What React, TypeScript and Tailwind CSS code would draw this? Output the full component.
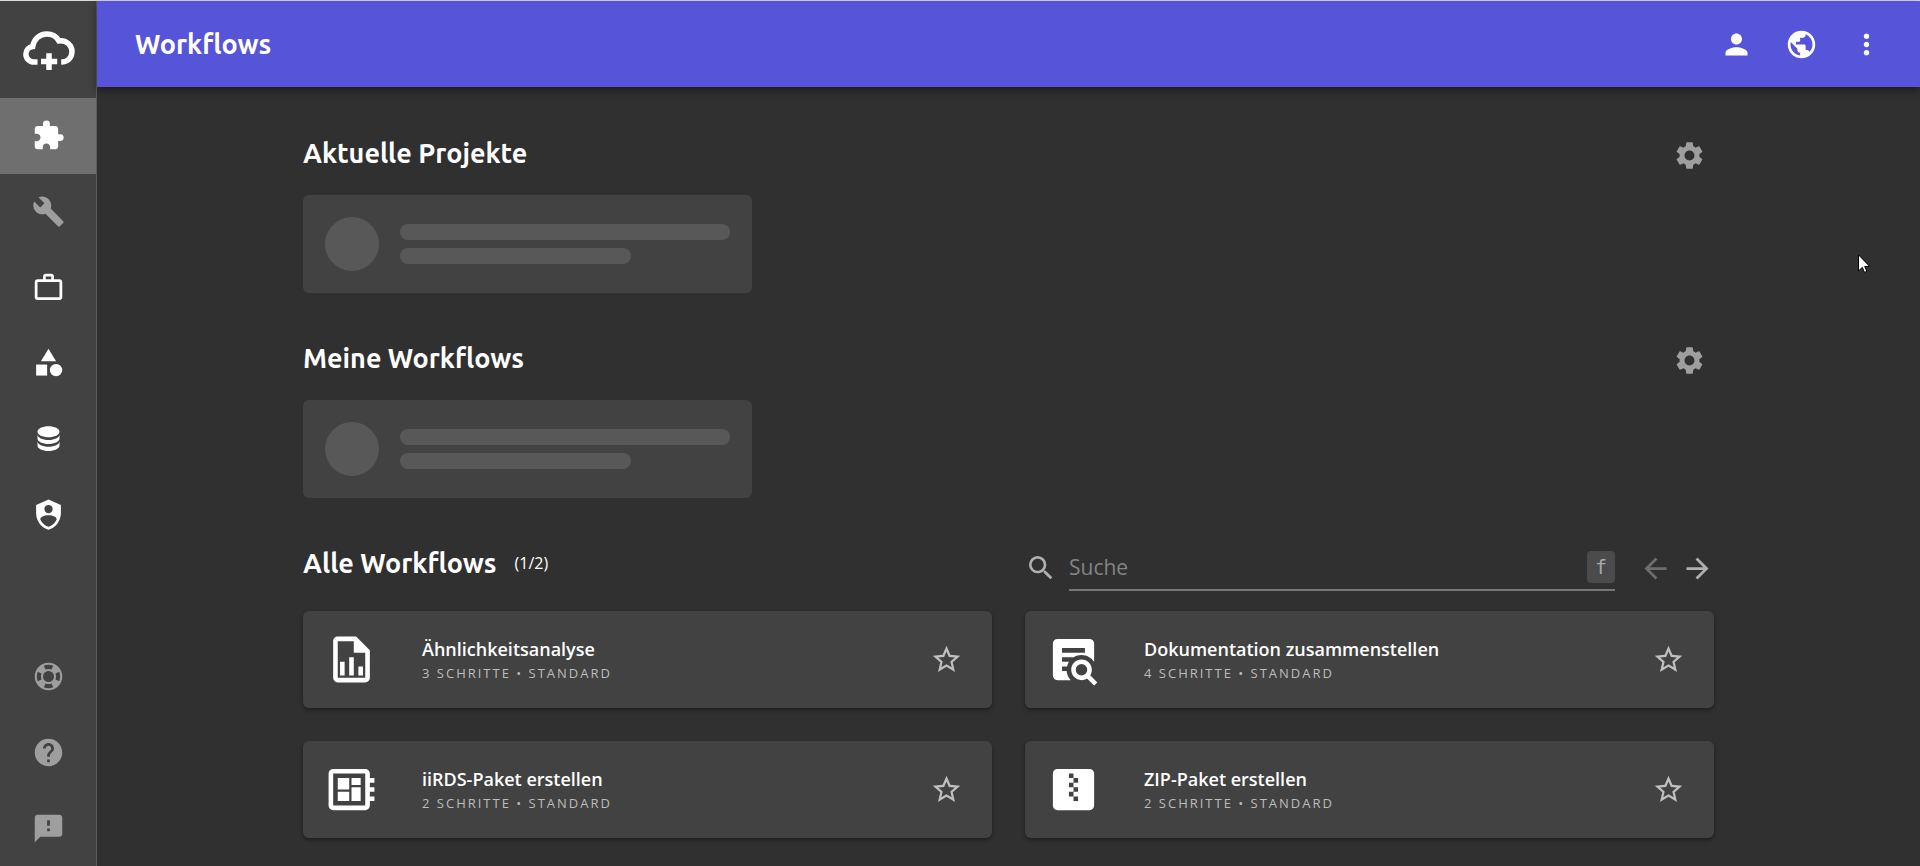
import React, { useState } from 'react';
import {
    MdArrowBack,
    MdArrowForward,
    MdBuild,
    MdCategory,
    MdExtension,
    MdFeedback,
    MdHelp,
    MdMoreVert,
    MdPerson,
    MdPublic,
    MdSearch,
    MdSettings,
    MdStarBorder,
    MdWorkOutline
} from 'react-icons/md';

interface PathIconProps {
    d: string;
    className?: string;
}

const PathIcon: React.FC<PathIconProps> = ({ d, className }) => (
    <svg viewBox="0 0 24 24" fill="currentColor" className={className} aria-hidden="true"><path d={d} /></svg>
);

const icons = {
    database: 'M12,3C7.58,3 4,4.79 4,7C4,9.21 7.58,11 12,11C16.42,11 20,9.21 20,7C20,4.79 16.42,3 12,3M4,9V12C4,14.21 7.58,16 12,16C16.42,16 20,14.21 20,12V9C20,11.21 16.42,13 12,13C7.58,13 4,11.21 4,9M4,14V17C4,19.21 7.58,21 12,21C16.42,21 20,19.21 20,17V14C20,16.21 16.42,18 12,18C7.58,18 4,16.21 4,14Z',
    shield: 'M12,1L3,5V11C3,16.55 6.84,21.74 12,23C17.16,21.74 21,16.55 21,11V5L12,1M12,5A3,3 0 0,1 15,8A3,3 0 0,1 12,11A3,3 0 0,1 9,8A3,3 0 0,1 12,5M17.13,17C15.92,18.85 14.11,20.24 12,20.92C9.89,20.24 8.08,18.85 6.87,17C6.53,16.5 6.24,16 6,15.47C6,13.82 8.71,12.47 12,12.47C15.29,12.47 18,13.79 18,15.47C17.76,16 17.47,16.5 17.13,17Z',
    lifebuoy: 'M19.79,15.41C20.74,13.24 20.74,10.75 19.79,8.59L17.05,9.83C17.65,11.21 17.65,12.78 17.06,14.17L19.79,15.41M15.42,4.21C13.25,3.26 10.76,3.26 8.59,4.21L9.83,6.94C11.22,6.35 12.79,6.35 14.18,6.95L15.42,4.21M4.21,8.58C3.26,10.76 3.26,13.24 4.21,15.42L6.95,14.17C6.35,12.79 6.35,11.21 6.95,9.82L4.21,8.58M8.59,19.79C10.76,20.74 13.25,20.74 15.42,19.78L14.18,17.05C12.8,17.65 11.22,17.65 9.84,17.06L8.59,19.79M12,2A10,10 0 0,1 22,12A10,10 0 0,1 12,22A10,10 0 0,1 2,12A10,10 0 0,1 12,2M12,8A4,4 0 0,0 8,12A4,4 0 0,0 12,16A4,4 0 0,0 16,12A4,4 0 0,0 12,8Z',
    fileChart: 'M14 2H6C4.89 2 4 2.9 4 4V20C4 21.11 4.89 22 6 22H18C19.11 22 20 21.11 20 20V8L14 2M18 20H6V4H13V9H18V20M9 13V19H7V13H9M15 15V19H17V15H15M11 11V19H13V11H11Z',
    textSearch: 'M15.5,12C18,12 20,14 20,16.5C20,17.38 19.75,18.21 19.31,18.9L22.39,22L21,23.39L17.88,20.32C17.19,20.75 16.37,21 15.5,21C13,21 11,19 11,16.5C11,14 13,12 15.5,12M15.5,14A2.5,2.5 0 0,0 13,16.5A2.5,2.5 0 0,0 15.5,19A2.5,2.5 0 0,0 18,16.5A2.5,2.5 0 0,0 15.5,14M7,15V17H9C9.14,18.55 9.8,19.94 10.81,21H5C3.89,21 3,20.1 3,19V5C3,3.89 3.89,3 5,3H19A2,2 0 0,1 21,5V13.03C19.85,11.21 17.82,10 15.5,10C14.23,10 13.04,10.37 12.04,11H7V13H10C9.64,13.6 9.34,14.28 9.17,15H7M17,9V7H7V9H17Z',
    board: 'M22,9V7H20V5A2,2 0 0,0 18,3H4A2,2 0 0,0 2,5V19A2,2 0 0,0 4,21H18A2,2 0 0,0 20,19V17H22V15H20V13H22V11H20V9H22M18,19H4V5H18V19M6,13H11V17H6V13M12,7H16V10H12V7M6,7H11V12H6V7M12,11H16V17H12V11Z',
    zip: 'M14,17H12V15H10V13H12V15H14M14,9H12V11H14V13H12V11H10V9H12V7H10V5H12V7H14M19,3H5A2,2 0 0,0 3,5V19A2,2 0 0,0 5,21H19A2,2 0 0,0 21,19V5A2,2 0 0,0 19,3Z'
};

const iconClass = 'w-[33px] h-[33px]';

const mainNav = [
    { label: 'Workflows', icon: <MdExtension className={iconClass} />, active: true },
    { label: 'Werkzeuge', icon: <MdBuild className={iconClass} />, muted: true },
    { label: 'Projekte', icon: <MdWorkOutline className={iconClass} /> },
    { label: 'Kategorien', icon: <MdCategory className={iconClass} /> },
    { label: 'Daten', icon: <PathIcon d={icons.database} className={iconClass} /> },
    { label: 'Verwaltung', icon: <PathIcon d={icons.shield} className={iconClass} /> }
];

const footerNav = [
    { label: 'Support', icon: <PathIcon d={icons.lifebuoy} className={iconClass} />, muted: true },
    { label: 'Hilfe', icon: <MdHelp className={iconClass} />, muted: true },
    { label: 'Feedback', icon: <MdFeedback className={iconClass} />, muted: true }
];

const workflows = [
    { title: 'Ähnlichkeitsanalyse', steps: 3, icon: icons.fileChart },
    { title: 'Dokumentation zusammenstellen', steps: 4, icon: icons.textSearch },
    { title: 'iiRDS-Paket erstellen', steps: 2, icon: icons.board },
    { title: 'ZIP-Paket erstellen', steps: 2, icon: icons.zip }
];

interface NavItem {
    label: string;
    icon: React.ReactNode;
    active?: boolean;
    muted?: boolean;
}

const NavLink: React.FC<{ item: NavItem }> = ({ item }) => (
    <a
        href="#"
        aria-label={item.label}
        className={`flex-1 flex items-center justify-center ${item.active ? 'bg-[#6f6f6f]' : ''} ${item.muted ? 'text-[#9e9e9e]' : 'text-white'}`}
    >
        {item.icon}
    </a>
);

const Sidebar: React.FC = () => (
    <aside className="w-[97px] shrink-0 flex flex-col bg-[#424242] border-r border-[#5c5c5c]">
        <a href="#" aria-label="Startseite" className="h-[97px] shrink-0 flex items-center justify-center">
            <svg viewBox="-2 -2 54 42" className="w-[54px] h-[42px]" fill="none" stroke="#fff" strokeWidth="5.5">
                <path d="M14.5 31.1H11C6.4 31.1 2.9 27.6 2.9 23.2C2.9 19.2 5.7 16.1 9.7 15.5C10.9 8.3 16.5 3 23.7 3C29.2 3 33.5 5.6 35.9 9.9C43.4 9 49 14.2 49 20.6C49 26.6 44.6 31.1 38.2 31.1" />
                <path d="M26 22.2V39M18 30.6H34.2" />
            </svg>
        </a>
        <nav className="h-[454px] flex flex-col">
            {mainNav.map(item => <NavLink key={item.label} item={item} />)}
        </nav>
        <nav className="h-[227px] mt-auto flex flex-col">
            {footerNav.map(item => <NavLink key={item.label} item={item} />)}
        </nav>
    </aside>
);

const Header: React.FC = () => (
    <header className="h-[86px] shrink-0 pl-[38px] pr-[37px] flex items-center justify-between bg-[#5654d8] text-white shadow-[0_3px_8px_rgba(0,0,0,0.45)]">
        <h1 className="font-['Ubuntu','Noto_Sans',sans-serif] text-[27px] leading-10 font-bold">Workflows</h1>
        <div className="flex items-center gap-8">
            <button type="button" aria-label="Benutzerkonto"><MdPerson className={iconClass} /></button>
            <button type="button" aria-label="Sprache"><MdPublic className={iconClass} /></button>
            <button type="button" aria-label="Mehr"><MdMoreVert className={iconClass} /></button>
        </div>
    </header>
);

const SectionTitle: React.FC<{ children: React.ReactNode }> = ({ children }) => (
    <h2 className="font-['Ubuntu','Noto_Sans',sans-serif] text-[27px] leading-10 font-semibold text-white">{children}</h2>
);

const PlaceholderSection: React.FC<{ title: string }> = ({ title }) => (
    <section className="mb-[45px]">
        <div className="h-11 mb-[18px] pr-2 flex items-start justify-between">
            <SectionTitle>{title}</SectionTitle>
            <button type="button" aria-label={`${title} anpassen`} className="self-center text-[#9e9e9e]"><MdSettings className={iconClass} /></button>
        </div>
        <div className="grid grid-cols-3 gap-8">
            <div className="h-[98px] px-[22px] flex items-center gap-[21px] rounded-md bg-[#424242]">
                <div className="w-[54px] h-[54px] shrink-0 rounded-full bg-[#585858]" />
                <div className="flex-1 space-y-2">
                    <div className="h-4 rounded-full bg-[#585858]" />
                    <div className="h-4 w-[70%] rounded-full bg-[#585858]" />
                </div>
            </div>
        </div>
    </section>
);

const WorkflowCard: React.FC<{ title: string; steps: number; icon: string }> = ({ title, steps, icon }) => (
    <article className="h-[97px] pl-[21px] pr-[29px] flex items-center rounded-md bg-[#424242] shadow-[0_2px_4px_rgba(0,0,0,0.4)]">
        <PathIcon d={icon} className="w-[55px] h-[55px] shrink-0 mr-[43px] text-white" />
        <div className="flex-1">
            <h3 className="text-lg leading-[26px] font-semibold text-white">{title}</h3>
            <p className="text-[13px] leading-[22px] tracking-[2px] uppercase text-[#bdbdbd]">{steps} Schritte • Standard</p>
        </div>
        <button type="button" aria-label={`${title} als Favorit markieren`} className="text-[#c0c0c0]"><MdStarBorder className={iconClass} /></button>
    </article>
);

export default function App() {
    const [query, setQuery] = useState('');

    return (
        <div className="relative min-h-screen flex border-t border-[#dcdcdc] bg-[#303030] font-['Segoe_UI','Open_Sans',sans-serif]">
            <Sidebar />
            <div className="flex-1 min-w-0 flex flex-col">
                <Header />
                <main className="w-full max-w-[1411px] mx-auto pt-[46px]">
                    <PlaceholderSection title="Aktuelle Projekte" />
                    <PlaceholderSection title="Meine Workflows" />

                    <section>
                        <div className="h-12 mb-5 grid grid-cols-2 gap-[33px]">
                            <div className="flex items-start gap-[18px]">
                                <SectionTitle>Alle Workflows</SectionTitle>
                                <span className="text-base leading-10 text-white">(1/2)</span>
                            </div>
                            <div className="h-[46px] self-end flex items-center text-[#b0b0b0]">
                                <label htmlFor="workflow-search" aria-label="Suche" className="mr-3"><MdSearch className="w-8 h-8" /></label>
                                <div className="flex-1 h-full flex items-center border-b-2 border-[#777777]">
                                    <input
                                        id="workflow-search"
                                        type="text"
                                        value={query}
                                        onChange={e => setQuery(e.target.value)}
                                        placeholder="Suche"
                                        className="flex-1 h-full bg-transparent text-[21px] text-white placeholder:text-[#838383] focus:outline-none"
                                    />
                                    <kbd className="w-7 h-8 flex items-center justify-center rounded-sm bg-[#4b4b4b] font-['DejaVu_Sans_Mono',monospace] text-xl text-[#a8a8a8]">f</kbd>
                                </div>
                                <button type="button" aria-label="Vorherige Seite" disabled className="ml-6 text-[#6e6e6e]"><MdArrowBack className={iconClass} /></button>
                                <button type="button" aria-label="Nächste Seite" className="ml-[9px]"><MdArrowForward className={iconClass} /></button>
                            </div>
                        </div>
                        <div className="grid grid-cols-2 gap-[33px]">
                            {workflows.map(w => <WorkflowCard key={w.title} title={w.title} steps={w.steps} icon={w.icon} />)}
                        </div>
                    </section>
                </main>
            </div>

            {/* mouse pointer */}
            <svg viewBox="0 0 12 19" className="absolute right-[50px] top-[253px] w-3 h-[19px]" aria-hidden="true">
                <path d="M.5 .8V17l3.8-3.6 2.2 5 2.4-1-2.2-5h4.9z" fill="#fff" stroke="#000" />
            </svg>
        </div>
    );
}
